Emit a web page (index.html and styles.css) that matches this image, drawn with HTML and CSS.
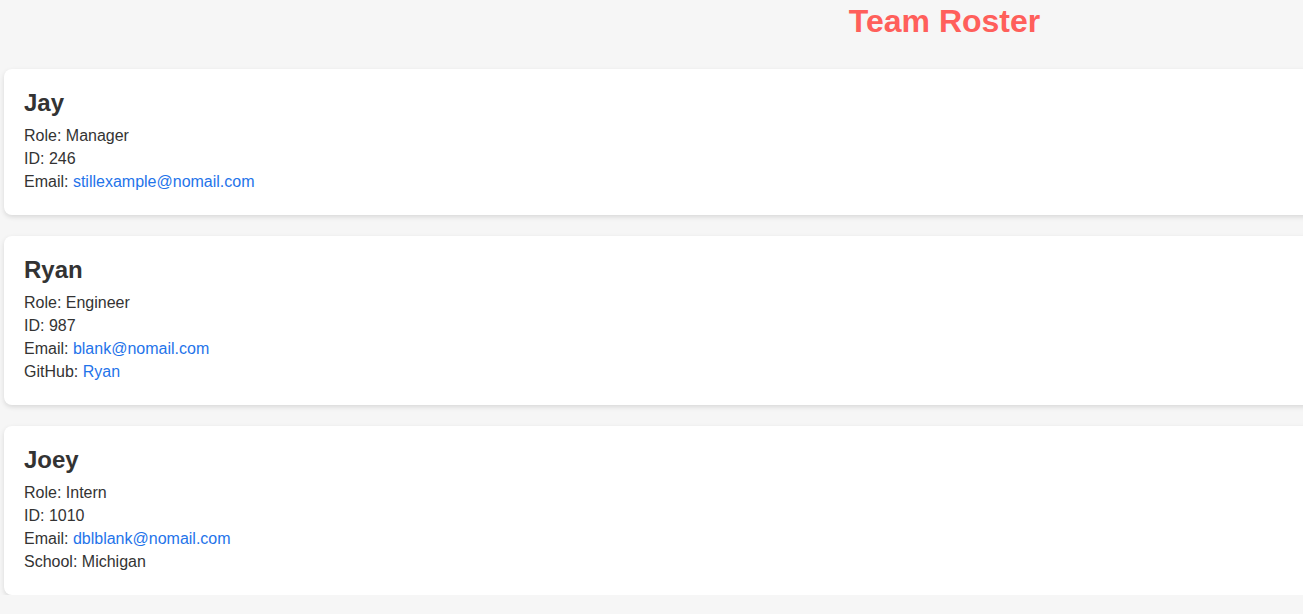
FILE: index.html
```html
<!DOCTYPE html>
<html lang="en">
<head>
<meta charset="utf-8">
<title>Team Roster</title>
<link rel="stylesheet" href="styles.css">
</head>
<body>
<div class="page">
  <header class="header">
    <h1 class="title">Team Roster</h1>
  </header>
  <main class="roster">
    <section class="card">
      <h2 class="name">Jay</h2>
      <div class="line">Role: Manager</div>
      <div class="line">ID: 246</div>
      <div class="line">Email: <a class="link" href="#">stillexample@nomail.com</a></div>
    </section>
    <section class="card">
      <h2 class="name">Ryan</h2>
      <div class="line">Role: Engineer</div>
      <div class="line">ID: 987</div>
      <div class="line">Email: <a class="link" href="#">blank@nomail.com</a></div>
      <div class="line">GitHub: <a class="link" href="#">Ryan</a></div>
    </section>
    <section class="card">
      <h2 class="name">Joey</h2>
      <div class="line">Role: Intern</div>
      <div class="line">ID: 1010</div>
      <div class="line">Email: <a class="link" href="#">dblblank@nomail.com</a></div>
      <div class="line">School: Michigan</div>
    </section>
  </main>
</div>
</body>
</html>
```
FILE: styles.css
```css
html, body {
  margin: 0;
  padding: 0;
  overflow: hidden;
  background: #f6f6f6;
}
body {
  font-family: "Liberation Sans", Arial, sans-serif;
  color: #333333;
}
.page {
  width: 1881px;
  margin-left: 4px;
  padding-top: 3px;
}
.header {
  display: flex;
  justify-content: center;
}
.title {
  margin: 0;
  font-size: 32px;
  font-weight: bold;
  color: #ff5f5b;
  line-height: 37px;
}
.roster {
  margin-top: 29px;
  display: flex;
  flex-direction: column;
  gap: 21px;
}
.card {
  background: #ffffff;
  border-radius: 8px;
  box-shadow: 0 2px 5px rgba(0, 0, 0, 0.12);
  padding: 20px 20px 22px 20px;
}
.name {
  margin: 0 0 7px 0;
  font-size: 24px;
  line-height: 28px;
  font-weight: bold;
  color: #333333;
}
.line {
  font-size: 16px;
  line-height: 23px;
}
.link {
  color: #1f74ea;
  text-decoration: none;
}
```
